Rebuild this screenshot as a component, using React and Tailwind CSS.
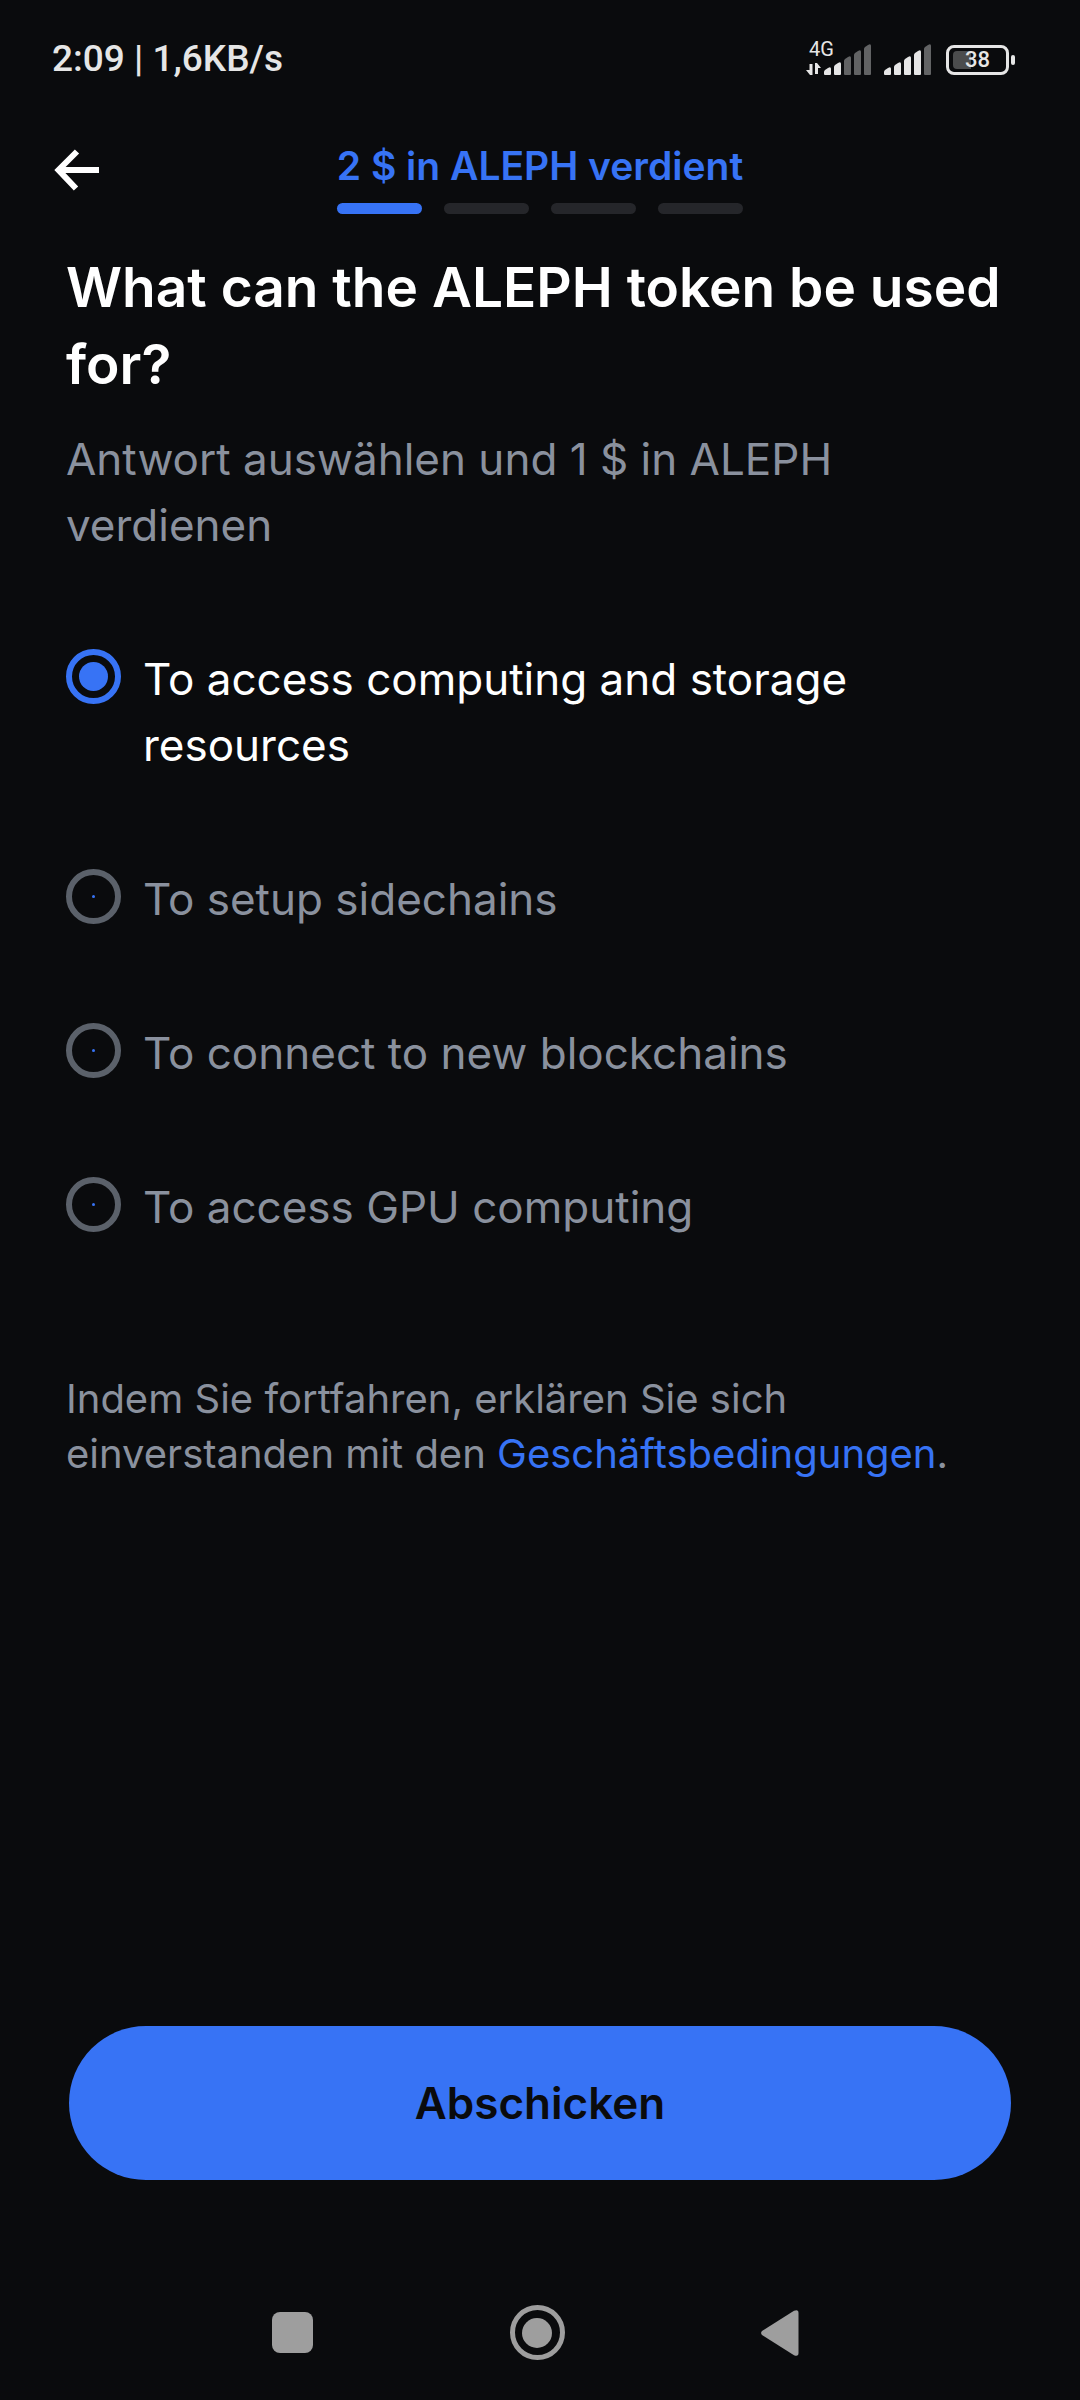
import { useState } from 'react';
import clsx from 'clsx';

const STEPS = 4;

const ANSWERS = [
  { id: 'storage', label: 'To access computing and storage resources' },
  { id: 'sidechains', label: 'To setup sidechains' },
  { id: 'blockchains', label: 'To connect to new blockchains' },
  { id: 'gpu', label: 'To access GPU computing' },
];

// bars are listed as height in px, shortest first
const BARS = [8, 13, 19, 25, 31];

function SignalBars({ level }) {
  return (
    <svg width="48" height="31" viewBox="0 0 48 31" aria-hidden="true">
      {BARS.map((h, i) => {
        const x = i * 10;
        const top = 31 - h;
        return (
          <path
            key={h}
            d={`M${x} 30V${top + 5}Q${x} ${top + 4} ${x + 1} ${top + 3}L${x + 4} ${top + 1}Q${x + 7} ${top - 1} ${x + 7} ${top + 2}V30Q${x + 7} 31 ${x + 6} 31H${x + 1}Q${x} 31 ${x} 30Z`}
            fill={i < level ? '#e6e6e6' : '#626364'}
          />
        );
      })}
    </svg>
  );
}

function StatusBar() {
  return (
    <div className="flex h-[118px] items-center justify-between pr-[65px] pl-[52px] font-['Roboto',sans-serif] font-medium text-[#e6e6e6]">
      <span className="text-[37px] leading-[44px]">2:09 | 1,6KB/s</span>
      <div className="flex items-end">
        <div className="relative flex items-end gap-[3px]">
          <span className="absolute bottom-4 left-[3px] text-[20px] leading-[20px] font-normal">4G</span>
          <svg width="15" height="12" viewBox="0 0 15 12" fill="#e6e6e6" aria-hidden="true">
            <path d="M3.500 1H6.500V12H4L0 7H3.500Z" />
            <path d="M9 0H11L15 5H12V11H9Z" />
          </svg>
          <SignalBars level={2} />
        </div>
        <div className="ml-3">
          <SignalBars level={4} />
        </div>
        <div className="ml-[14px] flex items-center gap-[2px]">
          <div className="relative flex h-[30px] w-[63px] items-center justify-center rounded-lg border-3 border-[#e6e6e6]">
            <span className="absolute top-[3px] left-1 h-[18px] w-[18px] rounded-l-sm bg-[#4b4c4d]" />
            <span className="relative text-[22px] leading-[24px]">38</span>
          </div>
          <span className="h-[10px] w-1 rounded-sm bg-[#e6e6e6]" />
        </div>
      </div>
    </div>
  );
}

function Header({ step }) {
  return (
    <header className="grid grid-cols-[1fr_auto_1fr] items-start px-[52px] pt-[26px]">
      <button type="button" aria-label="Zurück" className="mt-1 flex h-11 w-[50px] items-center">
        <svg width="50" height="44" viewBox="0 0 50 44" fill="none" stroke="#fff" strokeWidth="6">
          <path d="M47 22H8" />
          <path d="M25 3.500L6.500 22L24 40.500" />
        </svg>
      </button>
      <div>
        <p className="text-[39px] leading-[44px] font-semibold text-[#3773f5]">2 $ in ALEPH verdient</p>
        <div className="mt-[15px] flex gap-[22px]">
          {Array.from({ length: STEPS }, (_, i) => (
            <span
              key={i}
              className={clsx('h-[11px] flex-1 rounded-full', i < step ? 'bg-[#3773f5]' : 'bg-[#25262a]')}
            />
          ))}
        </div>
      </div>
    </header>
  );
}

function Answer({ label, value, checked, onChange }) {
  return (
    <label className={clsx('flex items-start gap-[22px] text-[44px] leading-[66px]', checked ? 'text-white' : 'text-[#8a919e]')}>
      <input
        type="radio"
        name="answer"
        value={value}
        checked={checked}
        onChange={onChange}
        className="mt-[3px] grid h-[55px] w-[55px] shrink-0 appearance-none place-content-center rounded-full border-[6px] border-[#5b616a] before:h-[3px] before:w-[3px] before:rounded-full before:bg-[#3773f5] before:content-[''] checked:border-[#3773f5] checked:before:h-[29px] checked:before:w-[29px]"
      />
      <span>{label}</span>
    </label>
  );
}

function NavBar() {
  return (
    <nav className="flex items-center justify-between pt-[125px] pr-[281px] pb-10 pl-[272px]">
      <button type="button" aria-label="Letzte Apps" className="h-[41px] w-[41px] rounded-lg bg-[#9e9e9e]" />
      <button
        type="button"
        aria-label="Startseite"
        className="flex h-[55px] w-[55px] items-center justify-center rounded-full border-[5px] border-[#9e9e9e]"
      >
        <span className="h-[30px] w-[30px] rounded-full bg-[#9e9e9e]" />
      </button>
      <button type="button" aria-label="Zurück">
        <svg width="38" height="46" viewBox="0 0 38 46" fill="#9e9e9e">
          <path d="M1 21L33 .8Q37.500 -1 37.500 3V43Q37.500 47 33 45.200L1 25Q-.8 23 1 21Z" />
        </svg>
      </button>
    </nav>
  );
}

export default function App() {
  const [answer, setAnswer] = useState('storage');

  return (
    <div className="flex min-h-screen flex-col bg-[#0a0b0d] font-['Inter','Liberation_Sans',sans-serif]">
      <StatusBar />
      <Header step={1} />
      <form className="flex flex-1 flex-col px-[66px] pt-[35px]" onSubmit={(e) => e.preventDefault()}>
        <h1 className="text-[55px] leading-[77px] font-semibold text-white">
          What can the ALEPH token be used for?
        </h1>
        <p className="mt-[23px] text-[44px] leading-[66px] text-[#8a919e]">
          Antwort auswählen und 1 $ in ALEPH<br />verdienen
        </p>
        <div role="radiogroup" aria-label="Antworten" className="mt-[88px] flex max-w-[820px] flex-col gap-[88px]">
          {ANSWERS.map(({ id, label }) => (
            <Answer key={id} value={id} label={label} checked={answer === id} onChange={() => setAnswer(id)} />
          ))}
        </div>
        <p className="mt-[131px] text-[40px] leading-[55px] text-[#8a919e]">
          Indem Sie fortfahren, erklären Sie sich<br />einverstanden mit den{' '}
          <a href="#terms" className="text-[#3773f5]">Geschäftsbedingungen</a>.
        </p>
        <button
          type="submit"
          className="mx-[3px] mt-auto h-[154px] rounded-full bg-[#3773f5] text-[44px] leading-[66px] font-semibold text-[#0a0b0d]"
        >
          Abschicken
        </button>
      </form>
      <NavBar />
    </div>
  );
}
